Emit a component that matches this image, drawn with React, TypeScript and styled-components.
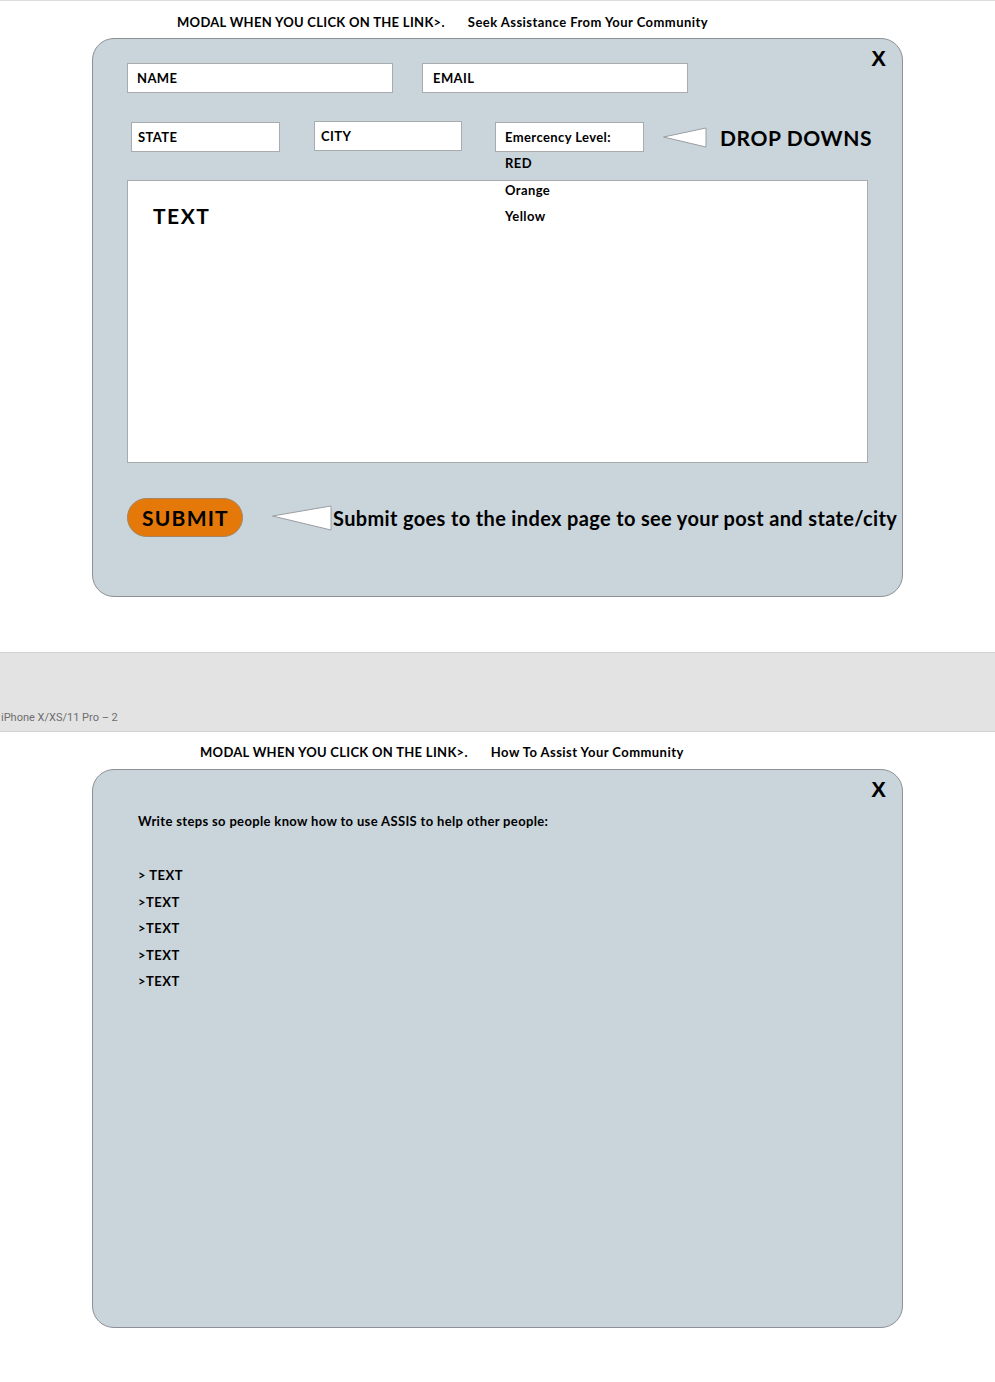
import React from "react";
import styled, { createGlobalStyle } from "styled-components";

const Global = createGlobalStyle`
  html, body { margin: 0; padding: 0; background: #ffffff; }
  body { font-family: Lato, "Liberation Sans", sans-serif; color: #000; }
  * { box-sizing: border-box; }
`;

const Page = styled.div`
  width: 995px;
  display: flex;
  flex-direction: column;
  border-top: 1px solid #dcdcdc;
`;

const Caption = styled.div<{ $left: number; $top: number }>`
  display: flex;
  gap: 23px;
  padding-left: ${(p) => p.$left}px;
  margin-top: ${(p) => p.$top}px;
  height: 16px;
  align-items: center;
  font-weight: 700;
  font-size: 13px;
  letter-spacing: 0.3px;
  white-space: nowrap;
`;

const Title = styled.span`
  letter-spacing: 0.45px;
`;

const Modal = styled.div<{ $top: number }>`
  position: relative;
  margin-left: 92px;
  margin-top: ${(p) => p.$top}px;
  width: 811px;
  height: 559px;
  background: #c9d4db;
  border: 1px solid #8d9094;
  border-radius: 22px;
  display: flex;
  flex-direction: column;
`;

const Close = styled.div`
  position: absolute;
  right: 16px;
  top: 7px;
  font-weight: 700;
  font-size: 22px;
  font-family: "Liberation Sans", Arial, sans-serif;
`;

const Row = styled.div<{ $top: number }>`
  display: flex;
  align-items: center;
  margin-top: ${(p) => p.$top}px;
  height: 30px;
`;

const Field = styled.div<{ $w: number; $ml: number; $dy?: number; $pad?: number }>`
  width: ${(p) => p.$w}px;
  height: 30px;
  margin-left: ${(p) => p.$ml}px;
  transform: translateY(${(p) => p.$dy ?? 0}px);
  background: #ffffff;
  border: 1px solid #a9acaf;
  display: flex;
  align-items: center;
  padding-left: ${(p) => p.$pad ?? 9}px;
  font-weight: 700;
  font-size: 13px;
  letter-spacing: 0.4px;
`;

const SelectWrap = styled.div`
  position: relative;
  margin-left: 33px;
`;

const Options = styled.div`
  position: absolute;
  top: calc(100% - 2px);
  left: 10px;
  z-index: 2;
  display: flex;
  flex-direction: column;
  font-weight: 700;
  font-size: 13px;
  letter-spacing: 0.4px;
  line-height: 26.5px;
`;

const Pointer = styled.svg<{ $ml: number }>`
  display: block;
  margin-left: ${(p) => p.$ml}px;
  flex: none;
`;

const Shout = styled.div<{ $ml: number; $size: number; $ls: number }>`
  margin-left: ${(p) => p.$ml}px;
  font-weight: 700;
  font-size: ${(p) => p.$size}px;
  letter-spacing: ${(p) => p.$ls}px;
  white-space: nowrap;
`;

const TextBox = styled.div`
  margin-top: 28px;
  margin-left: 34px;
  width: 741px;
  height: 283px;
  background: #ffffff;
  border: 1px solid #a9acaf;
  padding: 22px 0 0 25px;
  font-weight: 700;
  font-size: 21px;
  letter-spacing: 1.5px;
`;

const SubmitRow = styled.div`
  display: flex;
  align-items: center;
  margin-top: 35px;
  margin-left: 34px;
  height: 39px;
`;

const Submit = styled.button`
  width: 116px;
  height: 39px;
  border-radius: 20px;
  background: #e4790a;
  border: 1px solid #a4845f;
  font-family: Lato, "Liberation Sans", sans-serif;
  font-weight: 700;
  font-size: 21px;
  letter-spacing: 1.2px;
  color: #000;
  padding: 0 0 0 1px;
  text-align: center;
`;

const Band = styled.div`
  margin-top: 55px;
  height: 80px;
  background: #e3e3e3;
  border-top: 1px solid #d2d2d2;
  border-bottom: 1px solid #d2d2d2;
  display: flex;
  align-items: flex-end;
  padding: 0 0 7px 1px;
  font-family: Roboto, "Liberation Sans", sans-serif;
  font-size: 11px;
  color: #6e6e6e;
`;

const Intro = styled.div`
  margin: 43px 0 0 45px;
  font-weight: 700;
  font-size: 13px;
  letter-spacing: 0.35px;
`;

const Steps = styled.div`
  margin: 33px 0 0 45px;
  display: flex;
  flex-direction: column;
  font-weight: 700;
  font-size: 13px;
  letter-spacing: 0.5px;
  line-height: 26.5px;
`;

export default function App() {
  return (
    <>
      <Global />
      <Page>
        <Caption $left={177} $top={13}>
          <span>MODAL WHEN YOU CLICK ON THE LINK&gt;.</span>
          <Title>Seek Assistance From Your Community</Title>
        </Caption>
        <Modal $top={8}>
          <Close>X</Close>
          <Row $top={24}>
            <Field $w={266} $ml={34}>NAME</Field>
            <Field $w={266} $ml={29} $pad={10}>EMAIL</Field>
          </Row>
          <Row $top={29}>
            <Field $w={149} $ml={38} $pad={6}>STATE</Field>
            <Field $w={148} $ml={34} $dy={-1} $pad={6}>CITY</Field>
            <SelectWrap>
              <Field $w={149} $ml={0}>Emercency Level:</Field>
              <Options>
                <span>RED</span>
                <span>Orange</span>
                <span>Yellow</span>
              </Options>
            </SelectWrap>
            <Pointer $ml={19} width="44" height="21" viewBox="0 0 44 21">
              <polygon points="0.5,10 43,1 43,20" fill="#ffffff" stroke="#9a9ea2" strokeWidth="1" />
            </Pointer>
            <Shout $ml={13} $size={21} $ls={0.6}>DROP DOWNS</Shout>
          </Row>
          <TextBox>TEXT</TextBox>
          <SubmitRow>
            <Submit>SUBMIT</Submit>
            <Pointer $ml={29} width="60" height="26" viewBox="0 0 60 26">
              <polygon points="0.5,11 59,1 59,25" fill="#ffffff" stroke="#9a9ea2" strokeWidth="1" />
            </Pointer>
            <Shout $ml={1} $size={20} $ls={0.35}>Submit goes to the index page to see your post and state/city</Shout>
          </SubmitRow>
        </Modal>
        <Band>iPhone X/XS/11 Pro – 2</Band>
        <Caption $left={200} $top={12}>
          <span>MODAL WHEN YOU CLICK ON THE LINK&gt;.</span>
          <Title>How To Assist Your Community</Title>
        </Caption>
        <Modal $top={9}>
          <Close>X</Close>
          <Intro>Write steps so people know how to use ASSIS to help other people:</Intro>
          <Steps>
            <span>&gt; TEXT</span>
            <span>&gt;TEXT</span>
            <span>&gt;TEXT</span>
            <span>&gt;TEXT</span>
            <span>&gt;TEXT</span>
          </Steps>
        </Modal>
      </Page>
    </>
  );
}
